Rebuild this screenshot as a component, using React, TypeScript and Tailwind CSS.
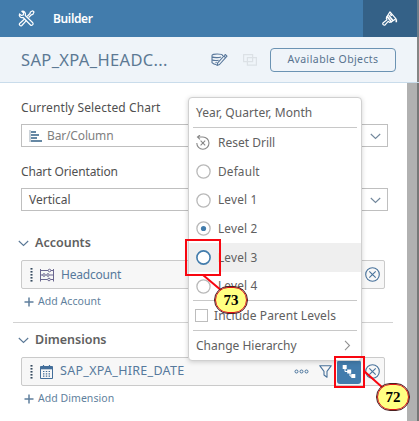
import type { ReactNode } from 'react';

const FONT = "font-['Noto_Sans','Open_Sans',sans-serif]";

function Chevron({ className = '' }: { className?: string }) {
  return (
    <svg className={className} width="11" height="7" viewBox="0 0 11 7" fill="none" stroke="currentColor" strokeWidth="1.1">
      <path d="M.8 1 5.5 5.5 10.2 1" />
    </svg>
  );
}

function ToolsIcon() {
  return (
    <svg width="17" height="17" viewBox="0 0 17 17" fill="none" stroke="#fff" strokeWidth="1.2" strokeLinejoin="round">
      <path d="M3.800 1.300 5.700 3 5.300 4.900 3.400 5.500 1.500 3.900C.6 6.200 2.700 8.300 5.100 7.500L12.500 15c1.200 1.200 3.500-.9 2.300-2.200L7.300 5.500C8 3 6.200.7 3.800 1.300Z" />
      <path d="M9.200 6.200 12 3.500 12.400 2 14.800.8 16 2 14.800 4.400 13.400 4.800 10.600 7.500M6.600 9 1.600 13.500c-.9 1.400.9 3 2.200 2L8.300 10.600" />
    </svg>
  );
}

function BrushIcon() {
  return (
    <svg width="16" height="15" viewBox="0 0 16 15" fill="none" stroke="#fff" strokeWidth="1.2" strokeLinejoin="round">
      <path d="M8 .9 14 7.800 9.500 10.800 5 5.500Z" />
      <path d="M5 5.500 9.500 10.800 7.400 11.300 6.200 10.300 3.300 13.700C1.800 14.800 0 13 1.200 11.700L5 8.700 4.300 7.300Z" />
      <path d="m6.500 4.300 4.600 5.500M8.500 2.500 9.500 5M14.300 8.300v3" strokeWidth="1.600" />
    </svg>
  );
}

function EditDataIcon() {
  return (
    <svg width="17" height="14" viewBox="0 0 17 14" fill="none" stroke="#58779b" strokeWidth="1.100" strokeLinejoin="round">
      <path d="M11.500 3V2.300C11.500 1.400 9 1 6.200 1S1 1.500 1 2.500v1.200c2 1.200 7 1.200 9 .2M1 3.700v3c1.500.9 4.200 1 6.700.5M1 6.700v3c1.300 1.600 3 1.900 4.500 1.900M5.700 9.400l-1.200.1" />
      <path d="M14.200 1.500 16 3.200 8.500 11.500 6 12.500 6.700 9.900ZM12.800 3l1.700 1.700" />
    </svg>
  );
}

function CloseCircle() {
  return (
    <svg width="15" height="15" viewBox="0 0 15 15" fill="none" stroke="#48729b" strokeWidth="1.100">
      <circle cx="7.500" cy="7.500" r="6.800" />
      <path d="m4.300 4.300 6.400 6.400m0-6.400-6.400 6.400" />
    </svg>
  );
}

function Grip() {
  return (
    <svg width="3" height="14" viewBox="0 0 3 14" fill="#354a5f">
      {[0, 3, 6, 9, 12].map((y) => (
        <rect key={y} x=".5" y={y} width="2" height="1.600" />
      ))}
    </svg>
  );
}

function AbacusIcon() {
  return (
    <svg width="14" height="14" viewBox="0 0 14 14" fill="none" stroke="#6b6790" strokeWidth="1">
      <path d="M.5 1v12.500M13.500 1v12.500M.5 2.500h7.500m3 0h2.500M.5 7h2m7.500 0h3.500M.5 11.500h7m3 0h3" />
      <circle cx="9.500" cy="2.500" r="1.300" />
      <circle cx="4" cy="7" r="1.300" />
      <circle cx="8" cy="7" r="1.300" />
      <circle cx="9" cy="11.500" r="1.300" />
    </svg>
  );
}

function CalendarIcon() {
  return (
    <svg width="13" height="14" viewBox="0 0 13 14" fill="none" stroke="#436e9a" strokeWidth="1">
      <path d="M.5 1.500h12v12H.5Z" />
      <path d="M.5 3h12" strokeWidth="2.600" />
      <path d="M3.500 0v2m6-2v2" strokeWidth="1.200" />
      <path d="M3 6.500h8M3 8.800h8M3 11.100h8" strokeWidth="1.200" strokeDasharray="1.400 1.400" />
    </svg>
  );
}

function FilterIcon() {
  return (
    <svg width="13" height="13" viewBox="0 0 13 13" fill="none" stroke="#48729b" strokeWidth="1.100" strokeLinejoin="round">
      <path d="M.7.7h11.600L8 6.300v5.900L5 10V6.300Z" />
    </svg>
  );
}

function HierarchyIcon() {
  return (
    <svg width="14" height="15" viewBox="0 0 14 15">
      <path d="M3 4v3.500h5v4.500h4" fill="none" stroke="#fff" strokeWidth="1" />
      <path d="M.7 1h4v4h-4ZM5.200 5.500h4v4h-4ZM9.300 10h4v4h-4Z" fill="#fff" />
    </svg>
  );
}

function Select({ children }: { children: ReactNode }) {
  return (
    <div className="flex h-[23px] w-[367px] items-center border border-[#bfbfbf] bg-white pt-px pr-[6px] pl-[7px] text-[12px]">
      {children}
      <Chevron className="ml-auto text-[#72879c]" />
    </div>
  );
}

function SectionTitle({ children }: { children: ReactNode }) {
  return (
    <div className="-ml-[3px] flex h-[16px] items-center gap-[6px] text-[12.500px] font-semibold text-[#606060]">
      <Chevron className="text-[#5a7896]" />
      <span>{children}</span>
    </div>
  );
}

function AddLink({ children }: { children: ReactNode }) {
  return (
    <div className="flex h-[16px] items-center gap-[4px] pl-[3px] text-[10.500px] tracking-[0.050px] text-[#5f7f9d]">
      <svg width="10" height="10" viewBox="0 0 10 10" stroke="currentColor" strokeWidth="1.500">
        <path d="M5 .5v9M.5 5h9" />
      </svg>
      <span>{children}</span>
    </div>
  );
}

function ItemBox({ children }: { children: ReactNode }) {
  return (
    <div className="flex h-[29px] w-[364px] items-center rounded-[2px] border border-[#cacaca] bg-[#f7f7f7] pr-[4px] pl-[8px] text-[12px] text-[#56799c]">
      {children}
    </div>
  );
}

type RadioState = 'off' | 'on' | 'hover';

function RadioRow({ label, state = 'off' }: { label: string; state?: RadioState }) {
  return (
    <div className={`flex h-[28.700px] items-center gap-[7px] pl-[7px] ${state === 'hover' ? 'bg-[#efefef]' : ''}`}>
      <svg width="15" height="15" viewBox="0 0 15 15">
        <circle cx="7.500" cy="7.500" r="6.600" fill="#fff" stroke={state === 'hover' ? '#427cac' : '#b9b9b9'} strokeWidth={state === 'hover' ? 1.600 : 1.300} />
        {state === 'on' && <circle cx="7.500" cy="7.500" r="2.600" fill="#427cac" />}
      </svg>
      <span className="text-[11.800px] tracking-[0.180px]">{label}</span>
    </div>
  );
}

function Popup() {
  return (
    <div className="absolute top-[97px] left-[188px] h-[264px] w-[174px] rounded-[4px] border border-[#d0d0d0] bg-white text-[12px] text-[#606060] shadow-[0_1px_5px_rgba(0,0,0,0.180)]">
      <div className="flex h-[29px] items-center pl-[7px] tracking-[0.050px]">Year, Quarter, Month</div>
      <div className="mr-[4px] ml-[4px] h-px bg-[#c8c8c8]" />
      <div className="flex h-[29px] items-center gap-[8px] pl-[7px]">
        <svg width="14" height="15" viewBox="0 0 14 15" fill="none" stroke="#888" strokeWidth="1.100">
          <path d="M.8 8a6.100 6.100 0 1 0 6-6H1.500M4 0 1.500 2 4 4.300M4.600 5.700l4.600 4.600m0-4.600-4.600 4.600" />
        </svg>
        <span>Reset Drill</span>
      </div>
      <RadioRow label="Default" />
      <RadioRow label="Level 1" />
      <RadioRow label="Level 2" state="on" />
      <RadioRow label="Level 3" state="hover" />
      <RadioRow label="Level 4" />
      <div className="mr-[4px] ml-[4px] h-px bg-[#c8c8c8]" />
      <div className="flex h-[29px] items-center gap-[6px] pl-[6px]">
        <div className="size-[13px] border border-[#bdbdbd]" />
        <span className="tracking-[0.100px]">Include Parent Levels</span>
      </div>
      <div className="mr-[4px] ml-[4px] h-px bg-[#c8c8c8]" />
      <div className="flex h-[29px] items-center justify-between pr-[11px] pl-[7px]">
        <span>Change Hierarchy</span>
        <Chevron className="-mr-[3px] -rotate-90 text-[#929292]" />
      </div>
    </div>
  );
}

const BADGE = "absolute flex h-[26px] w-[32px] items-center justify-center rounded-full border-[1.500px] border-[#e01015] bg-[#ffff82] font-['Liberation_Serif',serif] text-[15px] leading-none font-bold text-black outline outline-[0.500px] outline-[#4a2020]";

export default function App() {
  return (
    <div className={`relative flex h-[421px] w-[419px] flex-col overflow-hidden bg-white text-[#505050] ${FONT}`}>
      <div className="flex h-[37px] shrink-0 items-center bg-[#427cac] pl-[18px]">
        <ToolsIcon />
        <span className="mt-px ml-[18px] text-[12px] font-semibold tracking-[-0.350px] text-white">Builder</span>
        <div className="ml-auto flex h-full w-[54px] items-center justify-center bg-[#346187]">
          <BrushIcon />
        </div>
        <div className="h-full w-[2px] bg-[#6b7c89]" />
      </div>
      <div className="flex h-[46px] shrink-0 items-center border-b border-[#c9dceb] bg-[#eff4f9]">
        <span className="mt-[2px] w-[191px] pl-[21px] text-[16.500px] tracking-[0.350px] text-[#5c7994]">SAP_XPA_HEADC...</span>
        <div className="flex w-[79px] items-center gap-[15px] pl-[20px]">
          <EditDataIcon />
          <svg width="14" height="12" viewBox="0 0 14 12" fill="none" stroke="#dce1e6" strokeWidth="1.200">
            <path d="M.6.6h9v7h-9ZM4.400 3.600h9v7.500h-9Z" />
          </svg>
        </div>
        <div className="flex h-[24px] w-[126px] items-center justify-center rounded-[4px] border border-[#6b93b3] pt-px text-[10.500px] tracking-[0.400px] text-[#58738f]">Available Objects</div>
        <div className="ml-auto h-full w-[2px] bg-[#858585]" />
      </div>
      <div className="flex min-h-0 flex-1">
        <div className="flex flex-1 flex-col pl-[21px]">
          <div className="mt-[17px] flex h-[16px] items-center text-[12px] tracking-[0.100px]">Currently Selected Chart</div>
          <div className="mt-[8px]">
            <Select>
              <svg width="13" height="13" viewBox="0 0 13 13" fill="none" stroke="#346187" strokeWidth="1.600">
                <path d="M1 0v12" stroke="#9aa8b5" strokeWidth="1" />
                <path d="M2 2h5M2 5h8M2 8h6M2 11h11" />
              </svg>
              <span className="ml-[5px] tracking-[-0.150px] text-[#808080]">Bar/Column</span>
            </Select>
          </div>
          <div className="mt-[17px] flex h-[16px] items-center text-[12px] tracking-[-0.120px]">Chart Orientation</div>
          <div className="mt-[8px]">
            <Select>
              <span>Vertical</span>
            </Select>
          </div>
          <div className="mt-[24px]">
            <SectionTitle>Accounts</SectionTitle>
          </div>
          <div className="mt-[9px]">
            <ItemBox>
              <Grip />
              <div className="mr-[7px] ml-[7px]"><AbacusIcon /></div>
              <span className="tracking-[-0.200px]">Headcount</span>
              <div className="ml-auto"><CloseCircle /></div>
            </ItemBox>
          </div>
          <div className="mt-[5px]">
            <AddLink>Add Account</AddLink>
          </div>
          <div className="mt-[12px] -ml-[8px] h-px w-[380px] shrink-0 bg-[#d2d2d2]" />
          <div className="mt-[9px]">
            <SectionTitle>Dimensions</SectionTitle>
          </div>
          <div className="mt-[9px]">
            <ItemBox>
              <Grip />
              <div className="mr-[7px] ml-[7px]"><CalendarIcon /></div>
              <span className="text-[12.500px] tracking-[0.300px]">SAP_XPA_HIRE_DATE</span>
              <div className="ml-auto flex items-center">
                <svg width="15" height="5" viewBox="0 0 15 5" fill="none" stroke="#48729b">
                  <circle cx="2.500" cy="2.500" r="1.500" />
                  <circle cx="7.500" cy="2.500" r="1.500" />
                  <circle cx="12.500" cy="2.500" r="1.500" />
                </svg>
                <div className="ml-[10px]"><FilterIcon /></div>
                <div className="mr-[4px] ml-[5px] flex size-[24px] items-center justify-center rounded-[3px] bg-[#427cac]">
                  <HierarchyIcon />
                </div>
                <CloseCircle />
              </div>
            </ItemBox>
          </div>
          <div className="mt-[5px]">
            <AddLink>Add Dimension</AddLink>
          </div>
        </div>
        <div className="w-[10px] bg-[#b1b1b1]" />
        <div className="w-[2px] bg-[#777]" />
      </div>

      <Popup />

      <div className="absolute top-[239px] left-[185px] h-[37px] w-[36px] border-2 border-[#f80610]" />
      <div className="absolute top-[356px] left-[334px] h-[32px] w-[31px] border-2 border-[#f80610]" />
      <svg className="absolute top-0 left-0" width="419" height="421" fill="none" stroke="#f80610" strokeWidth="2">
        <path d="M203 275 222 291M364 371 383 388" />
      </svg>
      <div className={`${BADGE} top-[287px] left-[215px]`}>73</div>
      <div className={`${BADGE} top-[384px] left-[377px]`}>72</div>
    </div>
  );
}
